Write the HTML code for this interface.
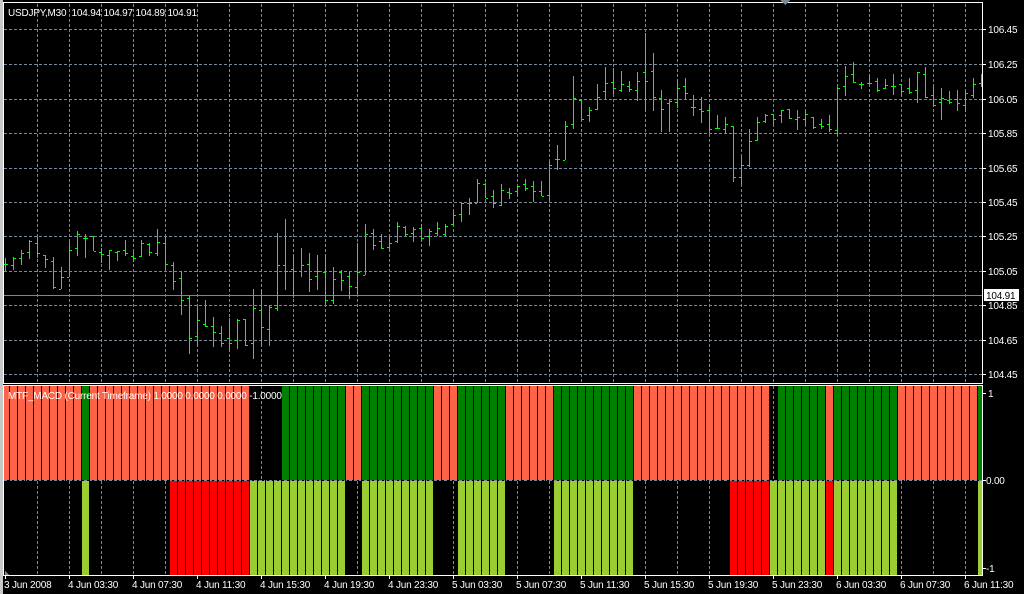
<!DOCTYPE html>
<html><head><meta charset="utf-8"><style>
html,body{margin:0;padding:0;background:#000;width:1024px;height:594px;overflow:hidden}
svg{display:block}
text{font-family:"Liberation Sans",sans-serif;font-size:10px;fill:#fff;letter-spacing:-0.2px}
</style></head><body>
<svg width="1024" height="594" viewBox="0 0 1024 594" shape-rendering="crispEdges">
<rect width="1024" height="594" fill="#000"/>
<rect x="0" y="0" width="3" height="594" fill="#c8c8c8"/>
<g stroke="#778899" stroke-width="1" stroke-dasharray="3 2" fill="none">
<path d="M4 29.5H982M4 64.5H982M4 99.5H982M4 133.5H982M4 168.5H982M4 202.5H982M4 236.5H982M4 271.5H982M4 305.5H982M4 340.5H982M4 374.5H982"/>
<path d="M37.5 4V383M69.5 4V383M101.5 4V383M133.5 4V383M165.5 4V383M197.5 4V383M229.5 4V383M261.5 4V383M293.5 4V383M325.5 4V383M357.5 4V383M389.5 4V383M421.5 4V383M453.5 4V383M485.5 4V383M517.5 4V383M549.5 4V383M581.5 4V383M613.5 4V383M645.5 4V383M677.5 4V383M709.5 4V383M741.5 4V383M773.5 4V383M805.5 4V383M837.5 4V383M869.5 4V383M901.5 4V383M933.5 4V383M965.5 4V383"/>
<path d="M37.5 386V575M69.5 386V575M101.5 386V575M133.5 386V575M165.5 386V575M197.5 386V575M229.5 386V575M261.5 386V575M293.5 386V575M325.5 386V575M357.5 386V575M389.5 386V575M421.5 386V575M453.5 386V575M485.5 386V575M517.5 386V575M549.5 386V575M581.5 386V575M613.5 386V575M645.5 386V575M677.5 386V575M709.5 386V575M741.5 386V575M773.5 386V575M805.5 386V575M837.5 386V575M869.5 386V575M901.5 386V575M933.5 386V575M965.5 386V575M4 480.5H982"/>
</g>
<path d="M4 295.5H982" stroke="#778899" stroke-width="1"/>
<path stroke="#00ff00" stroke-width="1" fill="none" d="
M5.5 258V271M3 264.5h2M6 264.5h2
M13.5 257V270M11 265.5h2M14 258.5h2
M21.5 250V265M19 258.5h2M22 253.5h2
M29.5 240V259M27 252.5h2M30 241.5h2
M37.5 237V258M35 243.5h2M38 253.5h2
M45.5 255V268M43 255.5h2M46 259.5h2
M53.5 257V289M51 261.5h2M54 287.5h2
M61.5 267V289M59 289.5h2M62 277.5h2
M69.5 242V277M67 277.5h2M70 250.5h2
M77.5 231V256M75 248.5h2M78 234.5h2
M85.5 234V258M83 238.5h2M86 238.5h2
M93.5 236V251M91 236.5h2M94 251.5h2
M101.5 248V263M99 252.5h2M102 254.5h2
M109.5 250V270M107 255.5h2M110 250.5h2
M117.5 251V261M115 252.5h2M118 251.5h2
M125.5 240V256M123 250.5h2M126 253.5h2
M133.5 252V262M131 256.5h2M134 258.5h2
M141.5 240V257M139 256.5h2M142 243.5h2
M149.5 243V256M147 244.5h2M150 252.5h2
M157.5 229V256M155 253.5h2M158 242.5h2
M165.5 237V269M163 243.5h2M166 264.5h2
M173.5 262V290M171 265.5h2M174 281.5h2
M181.5 271V315M179 278.5h2M182 300.5h2
M189.5 296V354M187 298.5h2M190 338.5h2
M197.5 307V347M195 336.5h2M198 320.5h2
M205.5 300V327M203 324.5h2M206 326.5h2
M213.5 317V347M211 326.5h2M214 332.5h2
M221.5 326V347M219 333.5h2M222 343.5h2
M229.5 318V349M227 338.5h2M230 343.5h2
M237.5 319V349M235 340.5h2M238 320.5h2
M245.5 319V346M243 319.5h2M246 345.5h2
M253.5 289V359M251 343.5h2M254 308.5h2
M261.5 290V347M259 310.5h2M262 327.5h2
M269.5 305V346M267 329.5h2M270 307.5h2
M277.5 233V311M275 308.5h2M278 265.5h2
M285.5 219V290M283 265.5h2M286 271.5h2
M293.5 255V298M291 269.5h2M294 271.5h2
M301.5 248V277M299 271.5h2M302 265.5h2
M309.5 253V292M307 264.5h2M310 279.5h2
M317.5 255V290M315 276.5h2M318 271.5h2
M325.5 254V304M323 272.5h2M326 300.5h2
M333.5 267V304M331 300.5h2M334 279.5h2
M341.5 270V291M339 272.5h2M342 280.5h2
M349.5 271V299M347 276.5h2M350 286.5h2
M357.5 243V294M355 287.5h2M358 272.5h2
M365.5 224V275M363 275.5h2M366 234.5h2
M373.5 229V250M371 233.5h2M374 245.5h2
M381.5 234V249M379 241.5h2M382 248.5h2
M389.5 236V250M387 247.5h2M390 243.5h2
M397.5 222V243M395 241.5h2M398 226.5h2
M405.5 226V236M403 227.5h2M406 234.5h2
M413.5 227V242M411 233.5h2M414 229.5h2
M421.5 224V241M419 228.5h2M422 238.5h2
M429.5 229V246M427 236.5h2M430 231.5h2
M437.5 222V236M435 233.5h2M438 228.5h2
M445.5 224V236M443 234.5h2M446 226.5h2
M453.5 210V225M451 224.5h2M454 215.5h2
M461.5 203V222M459 214.5h2M462 203.5h2
M469.5 198V215M467 203.5h2M470 203.5h2
M477.5 179V203M475 203.5h2M478 183.5h2
M485.5 183V198M483 184.5h2M486 198.5h2
M493.5 190V208M491 196.5h2M494 203.5h2
M501.5 184V206M499 205.5h2M502 190.5h2
M509.5 188V199M507 192.5h2M510 193.5h2
M517.5 186V196M515 191.5h2M518 186.5h2
M525.5 179V191M523 184.5h2M526 188.5h2
M533.5 181V202M531 186.5h2M534 191.5h2
M541.5 181V196M539 191.5h2M542 196.5h2
M549.5 162V202M547 195.5h2M550 165.5h2
M557.5 145V170M555 159.5h2M558 159.5h2
M565.5 121V160M563 160.5h2M566 126.5h2
M573.5 76V129M571 124.5h2M574 98.5h2
M581.5 99V119M579 100.5h2M582 119.5h2
M589.5 107V122M587 115.5h2M590 110.5h2
M597.5 84V110M595 109.5h2M598 97.5h2
M605.5 67V99M603 91.5h2M606 83.5h2
M613.5 68V94M611 82.5h2M614 88.5h2
M621.5 71V92M619 90.5h2M622 84.5h2
M629.5 81V92M627 86.5h2M630 89.5h2
M637.5 72V101M635 90.5h2M638 81.5h2
M645.5 33V112M643 72.5h2M646 81.5h2
M653.5 53V111M651 71.5h2M654 97.5h2
M661.5 90V132M659 98.5h2M662 109.5h2
M669.5 99V132M667 103.5h2M670 101.5h2
M677.5 79V108M675 102.5h2M678 88.5h2
M685.5 78V99M683 86.5h2M686 93.5h2
M693.5 95V116M691 107.5h2M694 107.5h2
M701.5 97V123M699 109.5h2M702 111.5h2
M709.5 105V133M707 110.5h2M710 129.5h2
M717.5 115V129M715 128.5h2M718 128.5h2
M725.5 117V134M723 129.5h2M726 124.5h2
M733.5 126V182M731 126.5h2M734 177.5h2
M741.5 157V185M739 177.5h2M742 165.5h2
M749.5 129V167M747 165.5h2M750 141.5h2
M757.5 117V141M755 140.5h2M758 122.5h2
M765.5 114V123M763 121.5h2M766 115.5h2
M773.5 114V124M771 114.5h2M774 119.5h2
M781.5 110V123M779 115.5h2M782 110.5h2
M789.5 109V119M787 109.5h2M790 118.5h2
M797.5 110V130M795 119.5h2M798 117.5h2
M805.5 110V125M803 119.5h2M806 114.5h2
M813.5 117V129M811 117.5h2M814 127.5h2
M821.5 119V129M819 124.5h2M822 126.5h2
M829.5 115V132M827 124.5h2M830 129.5h2
M837.5 87V136M835 130.5h2M838 88.5h2
M845.5 66V96M843 86.5h2M846 76.5h2
M853.5 62V83M851 74.5h2M854 82.5h2
M861.5 82V89M859 84.5h2M862 84.5h2
M869.5 74V84M867 83.5h2M870 83.5h2
M877.5 78V92M875 81.5h2M878 90.5h2
M885.5 79V89M883 88.5h2M886 85.5h2
M893.5 74V95M891 86.5h2M894 86.5h2
M901.5 84V96M899 84.5h2M902 91.5h2
M909.5 78V94M907 88.5h2M910 92.5h2
M917.5 72V103M915 90.5h2M918 72.5h2
M925.5 67V98M923 74.5h2M926 97.5h2
M933.5 86V106M931 95.5h2M934 105.5h2
M941.5 88V120M939 102.5h2M942 98.5h2
M949.5 91V104M947 100.5h2M950 102.5h2
M957.5 90V111M955 99.5h2M958 103.5h2
M965.5 92V112M963 105.5h2M966 93.5h2
M973.5 78V98M971 95.5h2M974 84.5h2
M981.5 74V87M979 83.5h2"/>
<g>
<rect x="4" y="386" width="77" height="94" fill="#ff6347"/>
<rect x="82" y="386" width="7" height="94" fill="#008000"/>
<rect x="90" y="386" width="159" height="94" fill="#ff6347"/>
<rect x="282" y="386" width="71" height="94" fill="#008000"/>
<rect x="346" y="386" width="15" height="94" fill="#ff6347"/>
<rect x="362" y="386" width="71" height="94" fill="#008000"/>
<rect x="434" y="386" width="23" height="94" fill="#ff6347"/>
<rect x="458" y="386" width="47" height="94" fill="#008000"/>
<rect x="506" y="386" width="47" height="94" fill="#ff6347"/>
<rect x="554" y="386" width="79" height="94" fill="#008000"/>
<rect x="634" y="386" width="135" height="94" fill="#ff6347"/>
<rect x="778" y="386" width="47" height="94" fill="#008000"/>
<rect x="826" y="386" width="7" height="94" fill="#ff6347"/>
<rect x="834" y="386" width="63" height="94" fill="#008000"/>
<rect x="898" y="386" width="79" height="94" fill="#ff6347"/>
<rect x="978" y="386" width="4" height="94" fill="#008000"/>
<rect x="82" y="481" width="7" height="94" fill="#9acd32"/>
<rect x="170" y="481" width="79" height="94" fill="#ff0000"/>
<rect x="250" y="481" width="95" height="94" fill="#9acd32"/>
<rect x="362" y="481" width="71" height="94" fill="#9acd32"/>
<rect x="458" y="481" width="47" height="94" fill="#9acd32"/>
<rect x="554" y="481" width="79" height="94" fill="#9acd32"/>
<rect x="730" y="481" width="39" height="94" fill="#ff0000"/>
<rect x="770" y="481" width="55" height="94" fill="#9acd32"/>
<rect x="826" y="481" width="7" height="94" fill="#ff0000"/>
<rect x="834" y="481" width="63" height="94" fill="#9acd32"/>
<rect x="978" y="481" width="4" height="94" fill="#9acd32"/>
</g>
<path stroke="#000" stroke-width="1" d="M9.5 386V575M17.5 386V575M25.5 386V575M33.5 386V575M41.5 386V575M49.5 386V575M57.5 386V575M65.5 386V575M73.5 386V575M81.5 386V575M89.5 386V575M97.5 386V575M105.5 386V575M113.5 386V575M121.5 386V575M129.5 386V575M137.5 386V575M145.5 386V575M153.5 386V575M161.5 386V575M169.5 386V575M177.5 386V575M185.5 386V575M193.5 386V575M201.5 386V575M209.5 386V575M217.5 386V575M225.5 386V575M233.5 386V575M241.5 386V575M249.5 386V575M257.5 386V575M265.5 386V575M273.5 386V575M281.5 386V575M289.5 386V575M297.5 386V575M305.5 386V575M313.5 386V575M321.5 386V575M329.5 386V575M337.5 386V575M345.5 386V575M353.5 386V575M361.5 386V575M369.5 386V575M377.5 386V575M385.5 386V575M393.5 386V575M401.5 386V575M409.5 386V575M417.5 386V575M425.5 386V575M433.5 386V575M441.5 386V575M449.5 386V575M457.5 386V575M465.5 386V575M473.5 386V575M481.5 386V575M489.5 386V575M497.5 386V575M505.5 386V575M513.5 386V575M521.5 386V575M529.5 386V575M537.5 386V575M545.5 386V575M553.5 386V575M561.5 386V575M569.5 386V575M577.5 386V575M585.5 386V575M593.5 386V575M601.5 386V575M609.5 386V575M617.5 386V575M625.5 386V575M633.5 386V575M641.5 386V575M649.5 386V575M657.5 386V575M665.5 386V575M673.5 386V575M681.5 386V575M689.5 386V575M697.5 386V575M705.5 386V575M713.5 386V575M721.5 386V575M729.5 386V575M737.5 386V575M745.5 386V575M753.5 386V575M761.5 386V575M769.5 386V575M777.5 386V575M785.5 386V575M793.5 386V575M801.5 386V575M809.5 386V575M817.5 386V575M825.5 386V575M833.5 386V575M841.5 386V575M849.5 386V575M857.5 386V575M865.5 386V575M873.5 386V575M881.5 386V575M889.5 386V575M897.5 386V575M905.5 386V575M913.5 386V575M921.5 386V575M929.5 386V575M937.5 386V575M945.5 386V575M953.5 386V575M961.5 386V575M969.5 386V575M977.5 386V575"/>
<g stroke="#fff" stroke-width="1" fill="none">
<path d="M3.5 2.5H982.5V383.5H3.5Z"/>
<path d="M3.5 385.5H982.5V575.5H3.5Z"/>
<path d="M983 29.5h3M983 64.5h3M983 99.5h3M983 133.5h3M983 168.5h3M983 202.5h3M983 236.5h3M983 271.5h3M983 305.5h3M983 340.5h3M983 374.5h3M983 393.5h3M983 480.5h3M983 568.5h3"/>
<path d="M5.5 576v3M69.5 576v3M133.5 576v3M197.5 576v3M261.5 576v3M325.5 576v3M389.5 576v3M453.5 576v3M517.5 576v3M581.5 576v3M645.5 576v3M709.5 576v3M773.5 576v3M837.5 576v3M901.5 576v3M965.5 576v3"/>
</g>
<path d="M780 0h10l-5 5z" fill="#778899"/>
<path d="M5 575v-4l4 4z" fill="#778899"/>
<text x="8" y="16" xml:space="preserve">USDJPY,M30  104.94 104.97 104.89 104.91</text>
<text x="8" y="399">MTF_MACD (Current Timeframe) 1.0000 0.0000 0.0000 -1.0000</text>
<g>
<text x="988" y="33">106.45</text>
<text x="988" y="68">106.25</text>
<text x="988" y="103">106.05</text>
<text x="988" y="137">105.85</text>
<text x="988" y="172">105.65</text>
<text x="988" y="206">105.45</text>
<text x="988" y="240">105.25</text>
<text x="988" y="275">105.05</text>
<text x="988" y="309">104.85</text>
<text x="988" y="344">104.65</text>
<text x="988" y="378">104.45</text>
<rect x="984" y="289" width="35" height="12" fill="#fff"/>
<text x="986" y="299" style="fill:#000">104.91</text>
<text x="988" y="397">1</text>
<text x="986" y="484">0.00</text>
<text x="986" y="572">-1</text>
</g>
<g>
<text x="4" y="588">3 Jun 2008</text>
<text x="68" y="588">4 Jun 03:30</text>
<text x="132" y="588">4 Jun 07:30</text>
<text x="196" y="588">4 Jun 11:30</text>
<text x="260" y="588">4 Jun 15:30</text>
<text x="324" y="588">4 Jun 19:30</text>
<text x="388" y="588">4 Jun 23:30</text>
<text x="452" y="588">5 Jun 03:30</text>
<text x="516" y="588">5 Jun 07:30</text>
<text x="580" y="588">5 Jun 11:30</text>
<text x="644" y="588">5 Jun 15:30</text>
<text x="708" y="588">5 Jun 19:30</text>
<text x="772" y="588">5 Jun 23:30</text>
<text x="836" y="588">6 Jun 03:30</text>
<text x="900" y="588">6 Jun 07:30</text>
<text x="964" y="588">6 Jun 11:30</text>
</g>
</svg>
</body></html>
